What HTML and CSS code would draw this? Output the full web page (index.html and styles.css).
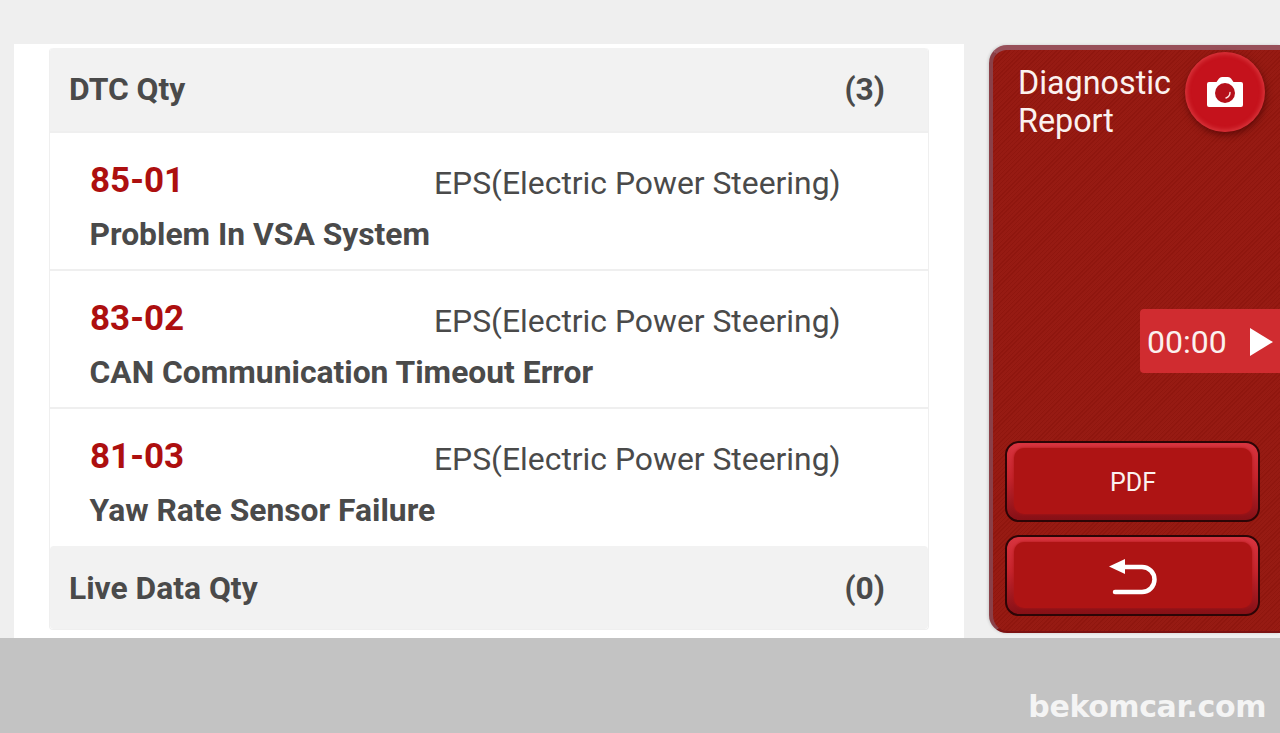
FILE: index.html
```html
<!DOCTYPE html>
<html lang="en">
<head>
  <meta charset="UTF-8">
  <meta name="viewport" content="width=device-width, initial-scale=1">
  <title>Diagnostic Report</title>
  <link rel="stylesheet" href="styles.css">
</head>
<body>
  <main class="screen">
    <section class="report">
      <div class="report-list">
        <div class="qty-row">
          <span>DTC Qty</span>
          <span class="qty-count">(3)</span>
        </div>

        <div class="dtc-row">
          <div class="dtc-top">
            <span class="dtc-code">85-01</span>
            <span class="dtc-system">EPS(Electric Power Steering)</span>
          </div>
          <div class="dtc-desc">Problem In VSA System</div>
        </div>

        <div class="dtc-row">
          <div class="dtc-top">
            <span class="dtc-code">83-02</span>
            <span class="dtc-system">EPS(Electric Power Steering)</span>
          </div>
          <div class="dtc-desc">CAN Communication Timeout Error</div>
        </div>

        <div class="dtc-row">
          <div class="dtc-top">
            <span class="dtc-code">81-03</span>
            <span class="dtc-system">EPS(Electric Power Steering)</span>
          </div>
          <div class="dtc-desc">Yaw Rate Sensor Failure</div>
        </div>

        <div class="qty-row qty-row-last">
          <span>Live Data Qty</span>
          <span class="qty-count">(0)</span>
        </div>
      </div>
    </section>

    <aside class="side">
      <div class="side-head">
        <h1 class="side-title">Diagnostic<br>Report</h1>
        <button class="camera" aria-label="Screenshot">
          <svg width="36" height="30" viewBox="0 0 36 30">
            <path d="M2 5h7.500l2.500-3.500q1-1.500 3-1.500h6q2 0 3 1.500L26.500 5H34a2 2 0 0 1 2 2v21a2 2 0 0 1-2 2H2a2 2 0 0 1-2-2V7a2 2 0 0 1 2-2z" fill="#fff"/>
            <circle cx="18" cy="16" r="10" fill="#b5101a"/>
            <path d="M23 15.500a6 6 0 0 1-4 5.500" fill="none" stroke="#fbe3e3" stroke-width="1.400" stroke-linecap="round"/>
          </svg>
        </button>
      </div>

      <div class="timer">
        <span>00:00</span>
        <svg width="24" height="30" viewBox="0 0 24 30"><path d="M1 1l23 14L1 29z" fill="#fff"/></svg>
      </div>

      <div class="side-buttons">
        <button class="side-btn"><span class="btn-face">PDF</span></button>
        <button class="side-btn" aria-label="Back">
          <span class="btn-face">
            <svg width="48" height="36" viewBox="0 0 48 36">
              <path d="M16 0L0 7.500 16 15z" fill="#fff"/>
              <path d="M14 8h19a12.500 12.500 0 0 1 0 25H6" fill="none" stroke="#fff" stroke-width="4.500" stroke-linecap="round"/>
            </svg>
          </span>
        </button>
      </div>
    </aside>
  </main>

  <footer class="bottom">
    <span class="watermark">bekomcar.com</span>
  </footer>
</body>
</html>
```

FILE: styles.css
```css
html, body {
  height: 100%;
}

body {
  margin: 0;
  background-color: #efefef;
  font-family: Roboto, sans-serif;
  color: #4a4a4a;
  display: flex;
  flex-direction: column;
  overflow: hidden;
}

.screen {
  height: 594px;
  margin-top: 44px;
  padding-left: 14px;
  display: flex;
  align-items: flex-start;
}

.report {
  width: 950px;
  height: 594px;
  box-sizing: border-box;
  padding: 4px 35px 0;
  background-color: #ffffff;
}

.report-list {
  border: 1px solid #efefef;
  border-top: none;
  border-radius: 4px;
  height: 582px;
  box-sizing: border-box;
}

.qty-row {
  height: 83px;
  box-sizing: border-box;
  padding: 0 43px 2px 19px;
  background-color: #f2f2f2;
  border-radius: 4px 4px 0 0;
  display: flex;
  align-items: center;
  justify-content: space-between;
  font-size: 31.800px;
  font-weight: 700;
}

.qty-row-last {
  margin-top: 1px;
  padding-bottom: 0;
  border-radius: 4px;
}

.dtc-row {
  height: 138px;
  box-sizing: border-box;
  padding: 28px 40px 0 40px;
  border-top: 2px solid #efefef;
}

.dtc-row:first-of-type {
  border-top-width: 1px;
}

.dtc-top {
  display: flex;
  align-items: flex-start;
}

.dtc-code {
  width: 344px;
  font-size: 35px;
  line-height: 40px;
  font-weight: 700;
  color: #ad0f0f;
}

.dtc-system {
  margin-top: 2px;
  font-size: 31.850px;
  line-height: 40px;
}

.dtc-desc {
  margin-top: 12px;
  margin-left: -0.500px;
  font-size: 31.800px;
  line-height: 38px;
  font-weight: 700;
}

.side {
  width: 291px;
  height: 588px;
  margin: 1px 0 0 25px;
  box-sizing: border-box;
  padding: 2px 0 15px 12px;
  border-radius: 18px 0 0 18px;
  border-left: 4px solid #8a4048;
  border-top: 5px solid #98505a;
  border-bottom: 2px solid #7c1212;
  background-color: #95170f;
  background-image: repeating-linear-gradient(135deg, rgba(0, 0, 0, 0.04) 0 1px, rgba(255, 255, 255, 0.015) 1px 3px);
  box-shadow: -1px 0 3px rgba(0, 0, 0, 0.15);
  display: flex;
  flex-direction: column;
  color: #ffffff;
}

.side-head {
  display: flex;
  justify-content: space-between;
  align-items: flex-start;
  padding-left: 13px;
  padding-right: 15px;
  height: 257px;
}

.side-title {
  margin: 12px 0 0;
  font-size: 32.300px;
  line-height: 38px;
  font-weight: 400;
  color: #fbf1ef;
}

.camera {
  width: 80px;
  height: 80px;
  padding: 0;
  border: none;
  border-radius: 50%;
  background-color: #c5121c;
  box-shadow: inset 0 0 4px 2px rgba(255, 120, 120, 0.35), 1px 3px 7px rgba(60, 0, 0, 0.6);
  display: flex;
  align-items: center;
  justify-content: center;
}

.timer {
  align-self: flex-end;
  width: 140px;
  height: 64px;
  box-sizing: border-box;
  padding: 2px 7px 0;
  border-radius: 4px 0 0 4px;
  background-color: #d02c30;
  display: flex;
  align-items: center;
  justify-content: space-between;
  font-size: 32px;
  color: #fbf1ef;
}

.side-buttons {
  margin-top: auto;
  display: flex;
  flex-direction: column;
  gap: 13px;
}

.side-btn {
  width: 255px;
  height: 81px;
  padding: 5px 6px 6px 7px;
  border: 2px solid #2c0506;
  border-radius: 14px;
  background: linear-gradient(#d8343f, #c4242c 45%, #861016);
  color: #fbf1ef;
  font-family: Roboto, sans-serif;
  font-size: 25px;
  display: flex;
}

.btn-face {
  flex: 1;
  padding-top: 3px;
  border-radius: 10px;
  background-color: #ae1414;
  box-shadow: 0 0 3px #ae1414;
  display: flex;
  align-items: center;
  justify-content: center;
}

.bottom {
  flex: 1;
  background-color: #c3c3c3;
  display: flex;
  justify-content: flex-end;
  align-items: flex-end;
  padding: 0 14px 8px 0;
}

.watermark {
  font-family: "DejaVu Sans", sans-serif;
  font-size: 30px;
  letter-spacing: -0.400px;
  line-height: 36px;
  font-weight: 700;
  color: #f4f4f4;
}
```
